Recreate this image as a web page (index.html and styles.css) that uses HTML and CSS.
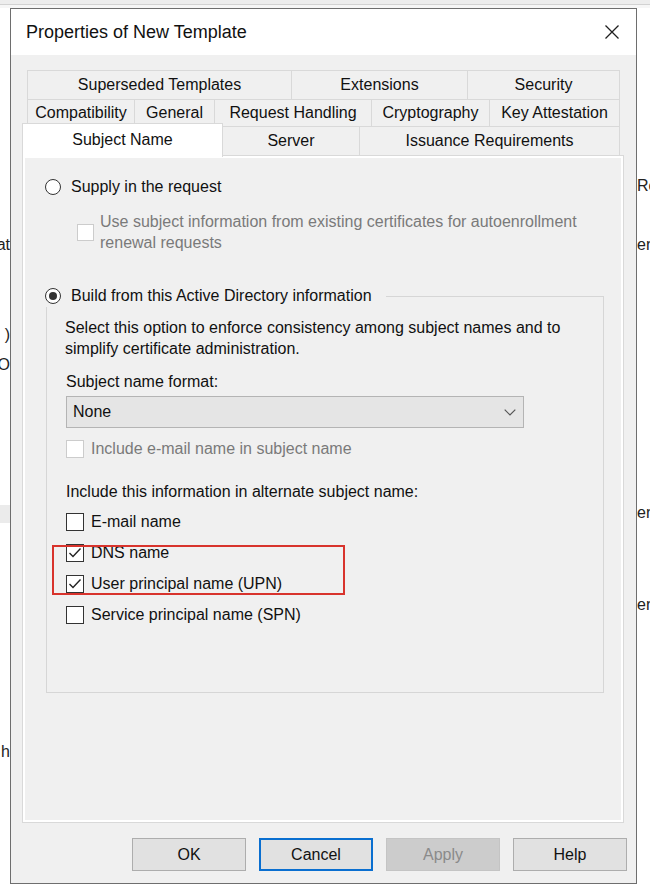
FILE: index.html
```html
<!DOCTYPE html>
<html lang="en">
<head>
<meta charset="utf-8">
<title>Properties of New Template</title>
<link rel="stylesheet" href="styles.css">
</head>
<body>
<div class="screen">
  <div class="topbar"></div>
  <div class="desk">
    <div class="side left">
      <div class="frag f-at">at</div>
      <div class="frag f-paren">)</div>
      <div class="frag f-o">O</div>
      <div class="band"></div>
      <div class="frag f-h">h</div>
    </div>

    <div class="dialog">
      <div class="titlebar">
        <span class="title">Properties of New Template</span>
        <svg class="close" width="16" height="16" viewBox="0 0 16 16"><path d="M1.5 1.5 L14.5 14.5 M14.5 1.5 L1.5 14.5" stroke="#1f1f1f" stroke-width="1.3" fill="none"/></svg>
      </div>

      <div class="body">
        <div class="tabs">
          <div class="tabrow row1">
            <div class="tab">Superseded Templates</div>
            <div class="tab">Extensions</div>
            <div class="tab">Security</div>
          </div>
          <div class="tabrow row2">
            <div class="tab">Compatibility</div>
            <div class="tab">General</div>
            <div class="tab">Request Handling</div>
            <div class="tab">Cryptography</div>
            <div class="tab">Key Attestation</div>
          </div>
          <div class="tabrow row3">
            <div class="tab selected">Subject Name</div>
            <div class="tab">Server</div>
            <div class="tab">Issuance Requirements</div>
          </div>
        </div>

        <div class="panel">
          <div class="opt">
            <span class="radio"></span>
            <span>Supply in the request</span>
          </div>
          <div class="subopt disabled">
            <span class="check off"></span>
            <span class="subtext">Use subject information from existing certificates for autoenrollment<br>renewal requests</span>
          </div>

          <fieldset class="group">
            <legend class="legend">
              <span class="opt">
                <span class="radio on"></span>
                <span>Build from this Active Directory information</span>
              </span>
            </legend>
            <div class="group-inner">
              <p class="desc">Select this option to enforce consistency among subject names and to<br>simplify certificate administration.</p>
              <div class="label">Subject name format:</div>
              <div class="combo">
                <span>None</span>
                <svg width="12" height="7" viewBox="0 0 12 7"><polyline points="0.7,0.7 6,6 11.3,0.7" fill="none" stroke="#555" stroke-width="1.2"/></svg>
              </div>
              <div class="crow disabled inc-email">
                <span class="check off"></span>
                <span>Include e-mail name in subject name</span>
              </div>
              <div class="label alt">Include this information in alternate subject name:</div>
              <div class="checklist">
                <div class="crow">
                  <span class="check"></span>
                  <span>E-mail name</span>
                </div>
                <div class="hl">
                  <div class="crow">
                    <span class="check"><svg width="16" height="16" viewBox="0 0 16 16"><polyline points="2.5,8 6,11.5 13.5,3.5" fill="none" stroke="#222" stroke-width="1.4"/></svg></span>
                    <span>DNS name</span>
                  </div>
                  <div class="crow">
                    <span class="check"><svg width="16" height="16" viewBox="0 0 16 16"><polyline points="2.5,8 6,11.5 13.5,3.5" fill="none" stroke="#222" stroke-width="1.4"/></svg></span>
                    <span>User principal name (UPN)</span>
                  </div>
                  <div class="redbox"></div>
                </div>
                <div class="crow">
                  <span class="check"></span>
                  <span>Service principal name (SPN)</span>
                </div>
              </div>
            </div>
          </fieldset>
        </div>

        <div class="actions">
          <div class="btn">OK</div>
          <div class="btn focus">Cancel</div>
          <div class="btn disabled">Apply</div>
          <div class="btn">Help</div>
        </div>
      </div>
    </div>

    <div class="side right">
      <div class="frag r-re">Re</div>
      <div class="frag r-er1">er</div>
      <div class="frag r-er2">er</div>
      <div class="frag r-er3">er</div>
    </div>
  </div>
  <div class="bottomstrip"></div>
</div>
</body>
</html>
```

FILE: styles.css
```css
* { box-sizing: border-box; }
html, body { margin: 0; padding: 0; }
body {
  width: 650px;
  height: 893px;
  overflow: hidden;
  background: #ffffff;
  font-family: "Liberation Sans", Arial, sans-serif;
  font-size: 16px;
  color: #111;
}

.screen { display: flex; flex-direction: column; height: 893px; }
.topbar {
  height: 8px;
  background: linear-gradient(#ededed 0 4px, #d2d2d2 4px 5px, #f6f6f6 5px);
}
.desk { display: flex; height: 876px; }
.bottomstrip { height: 9px; background: #fff; }

/* desktop fragments behind the dialog */
.side { overflow: hidden; display: flex; flex-direction: column; }
.side.left { width: 10px; align-items: flex-end; }
.side.right { width: 13px; align-items: flex-start; }
.frag { white-space: nowrap; line-height: 20px; height: 20px; color: #222; }
.f-at { margin-top: 227px; }
.f-paren { margin-top: 70px; }
.f-o { margin-top: 10px; height: 12px; }
.band { width: 10px; height: 18px; margin-top: 138px; background: #ebebeb; }
.f-h { margin-top: 219px; }
.r-re { margin-top: 168px; }
.r-er1 { margin-top: 39px; }
.r-er2 { margin-top: 248px; }
.r-er3 { margin-top: 72px; }

/* dialog window */
.dialog {
  width: 627px;
  height: 876px;
  border: 1px solid #6e6e6e;
  background: #f0f0f0;
  display: flex;
  flex-direction: column;
}
.titlebar {
  height: 46px;
  background: #ffffff;
  display: flex;
  align-items: center;
  justify-content: space-between;
  padding: 0 16px 0 15px;
}
.title { font-size: 18px; color: #111; }
.close { display: block; }

.body { padding: 15px 12px 12px 11px; }

/* tabs */
.tabs { display: flex; flex-direction: column; }
.tabrow { display: grid; }
.row1 { grid-template-columns: 265px 176px 152px; margin-left: 5px; height: 29px; }
.row2 { grid-template-columns: 108px 80px 157px 118px 130px; margin-left: 5px; height: 27px; }
.row3 { grid-template-columns: 201px 137px 260px; height: 29px; }
.tab {
  display: flex;
  align-items: center;
  justify-content: center;
  border: 1px solid #d9d9d9;
  border-bottom: none;
  background: #f0f0f0;
  color: #111;
  white-space: nowrap;
}
.tab + .tab { border-left: none; }
.tab.selected {
  background: #ffffff;
  margin-top: -3px;
  margin-bottom: -2px;
  position: relative;
  z-index: 1;
  padding-bottom: 2px;
}

/* panel */
.panel {
  height: 668px;
  border: 1px solid #d9d9d9;
  box-shadow: inset 0 0 0 2px #ffffff;
  background: #f0f0f0;
  padding: 20px 10px 0 22px;
}

.opt { display: flex; align-items: center; gap: 10px; line-height: 22px; height: 22px; white-space: nowrap; }
.radio {
  width: 16px;
  height: 16px;
  border: 1px solid #333;
  border-radius: 50%;
  background: #fff;
  display: flex;
  align-items: center;
  justify-content: center;
  flex: none;
}
.radio.on::after {
  content: "";
  width: 8px;
  height: 8px;
  border-radius: 50%;
  background: #333;
}

.check {
  width: 18px;
  height: 18px;
  border: 1px solid #333;
  background: #fff;
  flex: none;
  display: flex;
  align-items: center;
  justify-content: center;
}
.check.off { border-color: #cccccc; }
.disabled { color: #7a7a7a; }

.subopt {
  display: flex;
  align-items: center;
  gap: 6px;
  margin: 13px 0 0 32px;
  line-height: 21px;
}
.subopt .check { width: 17px; height: 17px; }

/* group box */
.group {
  margin: 32px 0 0 1px;
  width: 558px;
  border: 1px solid #d6d6d6;
  padding: 0 0 66px 0;
  min-width: 0;
}
.legend { padding: 0 14px 0 0; margin-left: -2px; }
.group-inner { padding-left: 19px; }
.desc { margin: 10px 0 0 -1px; line-height: 21px; }
.label { margin-top: 12px; line-height: 21px; }
.label.alt { margin-top: 21px; }
.combo {
  margin-top: 4px;
  width: 458px;
  height: 32px;
  border: 1px solid #b4b4b4;
  background: #e5e5e5;
  display: flex;
  align-items: center;
  justify-content: space-between;
  padding: 0 7px 0 6px;
  color: #111;
}
.combo svg { display: block; }

.crow { display: flex; align-items: center; gap: 7px; height: 22px; line-height: 22px; white-space: nowrap; }
.inc-email { margin-top: 10px; }
.checklist { display: flex; flex-direction: column; gap: 9px; margin-top: 9px; }
.hl { position: relative; display: flex; flex-direction: column; gap: 9px; }
.redbox {
  position: absolute;
  top: 3px;
  left: -14px;
  width: 293px;
  height: 50px;
  border: 2px solid #d8332c;
}

/* buttons */
.actions {
  display: flex;
  justify-content: flex-end;
  gap: 13px;
  margin-top: 15px;
  margin-right: -3px;
}
.btn {
  width: 114px;
  height: 33px;
  border: 1px solid #adadad;
  background: #e1e1e1;
  display: flex;
  align-items: center;
  justify-content: center;
  color: #111;
}
.btn.focus { border: 2px solid #0a6fd0; }
.btn.disabled { background: #cccccc; border-color: #c4c4c4; color: #8a8a8a; }
```
